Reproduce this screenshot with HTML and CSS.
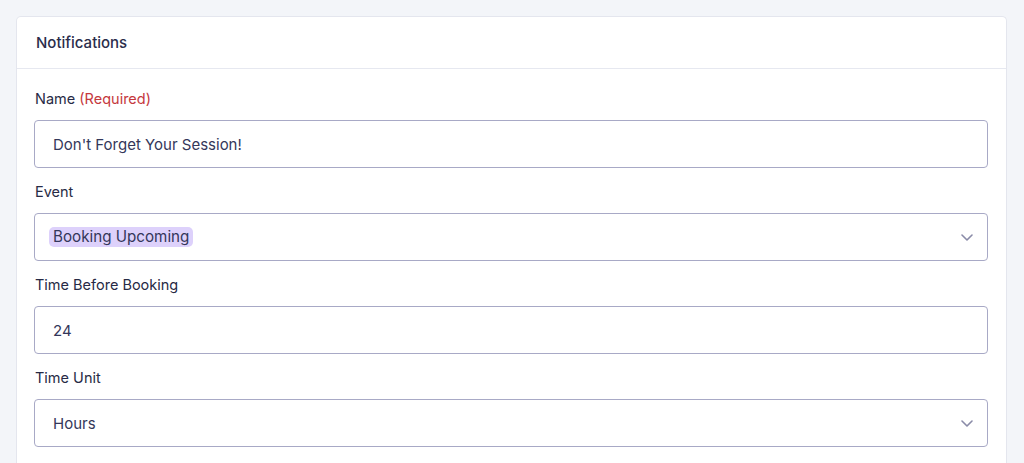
FILE: index.html
```html
<!DOCTYPE html>
<html lang="en">
<head>
<meta charset="utf-8">
<title>Notifications</title>
<link rel="stylesheet" href="styles.css">
</head>
<body>
<div class="card">
  <div class="card-header">Notifications</div>
  <div class="card-body">
    <div class="field">
      <label class="label">Name <span class="req">(Required)</span></label>
      <div class="control">Don't Forget Your Session!</div>
    </div>
    <div class="field">
      <label class="label">Event</label>
      <div class="control select">
        <span class="chip">Booking Upcoming</span>
        <svg class="chev" width="12" height="7" viewBox="0 0 12 7"><path d="M1 1l5 5 5-5" fill="none" stroke="#8a8ba8" stroke-width="1.6" stroke-linecap="round" stroke-linejoin="round"/></svg>
      </div>
    </div>
    <div class="field">
      <label class="label">Time Before Booking</label>
      <div class="control">24</div>
    </div>
    <div class="field">
      <label class="label">Time Unit</label>
      <div class="control select">
        <span>Hours</span>
        <svg class="chev" width="12" height="7" viewBox="0 0 12 7"><path d="M1 1l5 5 5-5" fill="none" stroke="#8a8ba8" stroke-width="1.6" stroke-linecap="round" stroke-linejoin="round"/></svg>
      </div>
    </div>
  </div>
</div>
</body>
</html>
```
FILE: styles.css
```css
html, body {
  margin: 0;
  padding: 0;
  background: #f3f5f9;
  font-family: Inter, "Noto Sans", "Liberation Sans", sans-serif;
  color: #2e3150;
}
body {
  padding: 16px 17px 0 16px;
  height: 463px;
  box-sizing: border-box;
  overflow: hidden;
}
.card {
  background: #fff;
  border: 1px solid #e4e6ee;
  border-bottom: none;
  border-radius: 5px 5px 0 0;
  height: 447px;
  box-sizing: border-box;
  overflow: hidden;
}
.card-header {
  height: 51px;
  display: flex;
  align-items: center;
  padding-left: 19px;
  font-size: 15px;
  font-weight: 500;
  color: #2a2d4b;
  border-bottom: 1px solid #e6e8f0;
}
.card-body {
  padding: 20px 18px 0 17px;
  display: flex;
  flex-direction: column;
  gap: 14px;
}
.field {
  display: flex;
  flex-direction: column;
  gap: 11px;
}
.label {
  font-size: 14.5px;
  line-height: 20px;
  height: 20px;
  font-weight: 400;
  color: #272a45;
  padding-left: 1px;
}
.req {
  color: #c5383d;
}
.control {
  height: 48px;
  flex: none;
  box-sizing: border-box;
  border: 1px solid #a8a9c6;
  border-radius: 4px;
  display: flex;
  align-items: center;
  padding: 0 18px;
  font-size: 15px;
  color: #34375a;
}
.select {
  justify-content: space-between;
  padding-left: 14px;
  padding-right: 14px;
}
.select > span:not(.chip) {
  padding-left: 4px;
}
.chip {
  background: #ddd1fb;
  border-radius: 5px;
  padding: 0 4px;
  height: 20px;
  line-height: 20px;
  font-size: 15.2px;
}
.chev {
  display: block;
}
```
